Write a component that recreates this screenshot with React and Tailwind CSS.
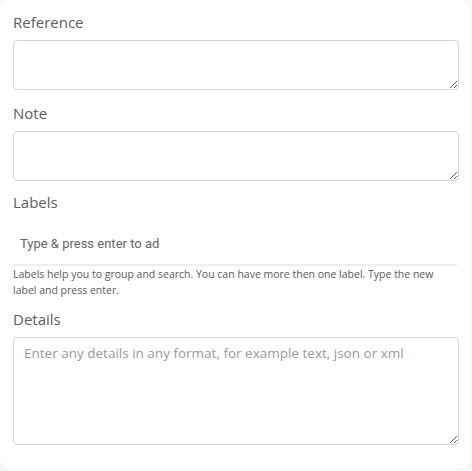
import React from 'react'

function Field({ label, children }) {
  return (
    <div>
      <label className="block text-[15px] leading-[20px] font-medium text-[#5e5e5e] mb-[8px]">{label}</label>
      {children}
    </div>
  )
}

export default function App() {
  return (
    <div className="min-h-[471px] w-[472px] bg-[#f8f8f8]" style={{ fontFamily: '"Open Sans", sans-serif' }}>
      <div className="w-[470px] h-[468px] bg-white rounded-[10px] px-[13px] pt-[12px]">
        <Field label="Reference">
          <textarea className="block w-[446px] h-[50px] border border-[#d5d7dc] rounded-[4px] bg-white" />
        </Field>
        <div className="mt-[13px]">
          <Field label="Note">
            <textarea className="block w-[446px] h-[50px] border border-[#d5d7dc] rounded-[4px] bg-white" />
          </Field>
        </div>
        <div className="mt-[11px]">
          <Field label="Labels">
            <div className="border-b-2 border-[#eeeeee] pt-[14px] pb-[10px] px-[7px]">
              <input
                className="block w-[140px] text-[13px] leading-[20px] text-[#333] placeholder:text-[#666] outline-none"
                style={{ fontFamily: 'Roboto, sans-serif' }}
                placeholder="Type & press enter to add"
              />
            </div>
          </Field>
          <p className="mt-0 text-[10.5px] leading-[16px] text-[#5a5a5a]">
            Labels help you to group and search. You can have more then one label. Type the new label and press enter.
          </p>
        </div>
        <div className="mt-[11px]">
          <Field label="Details">
            <textarea
              className="block w-[446px] h-[108px] border border-[#d5d7dc] rounded-[4px] bg-white px-[10px] py-[5px] text-[13.5px] leading-[20px] placeholder:text-[#9a9a9a] outline-none"
              placeholder="Enter any details in any format, for example text, json or xml"
            />
          </Field>
        </div>
      </div>
    </div>
  )
}
